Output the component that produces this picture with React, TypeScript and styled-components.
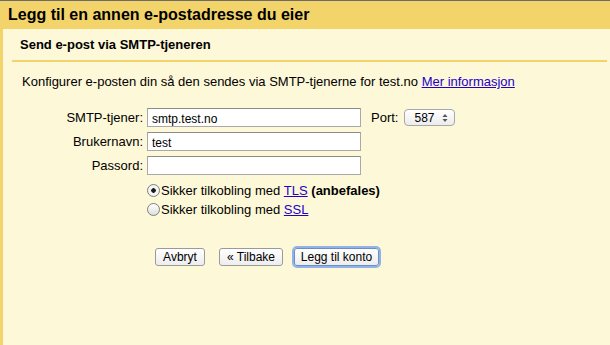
import React from 'react';
import styled, { createGlobalStyle } from 'styled-components';

const Global = createGlobalStyle`
  html, body { margin: 0; padding: 0; }
  body {
    background: #fdf8d8;
    font-family: "Liberation Sans", Arial, sans-serif;
    font-size: 13px;
    color: #000;
  }
`;

const Page = styled.div`
  width: 610px;
  height: 345px;
  background: #fdf8d8;
  border-top: 1px solid #6b6b6b;
  box-sizing: border-box;
  overflow: hidden;
  display: flex;
  flex-direction: column;
`;

const Header = styled.div`
  height: 28px;
  background: #f2d46a;
  display: flex;
  align-items: center;
  padding-left: 8px;
  font-size: 16px;
  font-weight: bold;
`;

const Body = styled.div`
  flex: 1;
  border-left: 3px solid #f2d46a;
  padding: 0 3px 0 9px;
`;

const SubHeader = styled.div`
  height: 31px;
  border-bottom: 2px solid #f2d46a;
  display: flex;
  align-items: center;
  padding-left: 8px;
  font-weight: bold;
  font-size: 13px;
`;

const Intro = styled.p`
  margin: 12px 0 0 10px;
  font-size: 13px;
`;

const Link = styled.a`
  color: #2200cc;
  text-decoration: underline;
  cursor: pointer;
`;

const Form = styled.div`
  display: grid;
  grid-template-columns: 131px auto;
  column-gap: 4px;
  row-gap: 5px;
  margin-top: 19px;
  align-items: center;
`;

const Label = styled.label`
  text-align: right;
  font-size: 13px;
`;

const FieldRow = styled.div`
  display: flex;
  align-items: center;
`;

const TextInput = styled.input`
  width: 214px;
  height: 19px;
  box-sizing: border-box;
  border: 1px solid #a9a9a9;
  border-top-color: #8c8c8c;
  background: #fff;
  font-family: "Liberation Sans", Arial, sans-serif;
  font-size: 12px;
  padding: 2px 4px 0;
  margin: 0;
  outline: none;
`;

const PortLabel = styled.span`
  margin: 0 6px 0 10px;
`;

const Select = styled.div`
  width: 51px;
  height: 17px;
  box-sizing: border-box;
  border: 1px solid #a8a8a8;
  border-radius: 4px;
  background: linear-gradient(#ffffff, #ececec);
  display: flex;
  align-items: center;
  justify-content: space-between;
  padding: 0 6px 0 9px;
  font-size: 12px;
`;

const Radios = styled.div`
  grid-column: 2;
  display: flex;
  flex-direction: column;
  gap: 4px;
  margin-top: 3px;
`;

const RadioRow = styled.label`
  display: flex;
  align-items: center;
  font-size: 13px;
`;

const RadioDot = styled.span<{ $checked?: boolean }>`
  width: 13px;
  height: 13px;
  border-radius: 50%;
  box-sizing: border-box;
  border: 1px solid #7e7e7e;
  background: ${p => (p.$checked ? 'radial-gradient(circle, #1b1b1b 0 2px, #f4f4f4 2.5px)' : 'linear-gradient(#ffffff, #dedede)')};
  margin-right: 1px;
`;

const Buttons = styled.div`
  display: flex;
  margin: 31px 0 0 143px;
`;

const Button = styled.button<{ $focus?: boolean; $w: number; $gap: number }>`
  width: ${p => p.$w}px;
  height: 18px;
  box-sizing: border-box;
  padding: 0;
  font-family: "Liberation Sans", Arial, sans-serif;
  font-size: 12px;
  border: 1px solid #9a9a9a;
  border-radius: 3px;
  background: linear-gradient(#ffffff, #ededed);
  color: #000;
  margin: 0 0 0 ${p => p.$gap}px;
  ${p => (p.$focus ? 'box-shadow: 0 0 0 2px #8fb3e8; border-color: #6f8fc4;' : '')}
`;

const Arrows = () => (
  <svg width="6" height="10" viewBox="0 0 6 10">
    <path d="M3 1 L5.5 4 H0.5 Z" fill="#555" />
    <path d="M3 9 L5.5 6 H0.5 Z" fill="#555" />
  </svg>
);

export default function App() {
  return (
    <>
      <Global />
      <Page>
        <Header>Legg til en annen e-postadresse du eier</Header>
        <Body>
          <SubHeader>Send e-post via SMTP-tjeneren</SubHeader>
          <Intro>
            Konfigurer e-posten din så den sendes via SMTP-tjenerne for test.no <Link>Mer informasjon</Link>
          </Intro>
          <Form>
            <Label>SMTP-tjener:</Label>
            <FieldRow>
              <TextInput defaultValue="smtp.test.no" />
              <PortLabel>Port:</PortLabel>
              <Select>
                <span>587</span>
                <Arrows />
              </Select>
            </FieldRow>
            <Label>Brukernavn:</Label>
            <FieldRow>
              <TextInput defaultValue="test" />
            </FieldRow>
            <Label>Passord:</Label>
            <FieldRow>
              <TextInput type="password" />
            </FieldRow>
            <Radios>
              <RadioRow>
                <RadioDot $checked />
                Sikker tilkobling med&nbsp;<Link>TLS</Link>&nbsp;<b>(anbefales)</b>
              </RadioRow>
              <RadioRow>
                <RadioDot />
                Sikker tilkobling med&nbsp;<Link>SSL</Link>
              </RadioRow>
            </Radios>
          </Form>
          <Buttons>
            <Button $w={50} $gap={0}>Avbryt</Button>
            <Button $w={64} $gap={14}>« Tilbake</Button>
            <Button $w={85} $gap={11} $focus>Legg til konto</Button>
          </Buttons>
        </Body>
      </Page>
    </>
  );
}
